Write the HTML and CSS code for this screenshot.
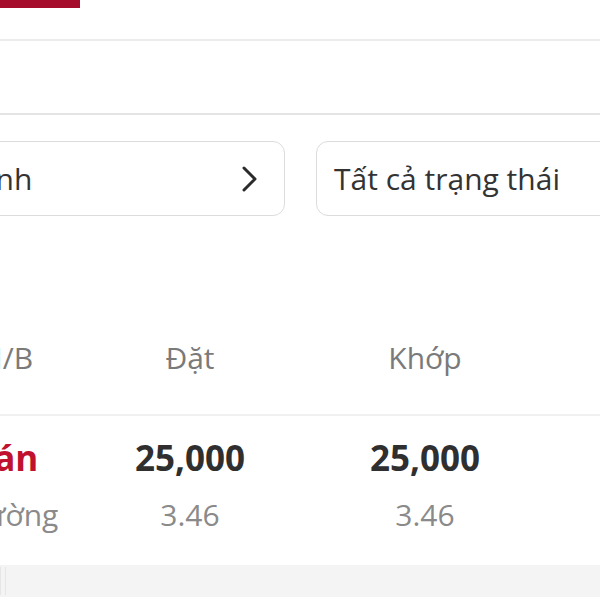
FILE: index.html
```html
<!DOCTYPE html>
<html lang="vi">
<head>
<meta charset="utf-8">
<title>Sổ lệnh</title>
<link rel="stylesheet" href="styles.css">
</head>
<body>
<div class="screen">
  <div class="tabbar"><span class="tab-indicator"></span></div>
  <div class="search-area"></div>
  <div class="filters">
    <div class="select select-left">
      <span class="select-text">Tất cả loại lệnh</span>
      <svg class="chev" width="22" height="28" viewBox="0 0 22 28"><path d="M6 3 L17 14 L6 25" fill="none" stroke="#2b2b2b" stroke-width="3" stroke-linecap="round" stroke-linejoin="round"/></svg>
    </div>
    <div class="select select-right">
      <span class="select-text">Tất cả trạng thái</span>
    </div>
  </div>
  <div class="table">
    <div class="row head">
      <div class="cell">M/B</div>
      <div class="cell">Đặt</div>
      <div class="cell">Khớp</div>
    </div>
    <div class="row body">
      <div class="cell">
        <div class="main sell">Bán</div>
        <div class="sub">Thường</div>
      </div>
      <div class="cell">
        <div class="main">25,000</div>
        <div class="sub">3.46</div>
      </div>
      <div class="cell">
        <div class="main">25,000</div>
        <div class="sub">3.46</div>
      </div>
    </div>
  </div>
  <div class="band"><span class="band-edge"></span></div>
</div>
</body>
</html>
```
FILE: styles.css
```css
html, body {
  margin: 0;
  padding: 0;
  background: #ffffff;
}
body {
  width: 600px;
  height: 600px;
  overflow: hidden;
  font-family: "Open Sans", "Noto Sans", sans-serif;
  color: #333333;
}
.screen {
  width: 600px;
}
.tabbar {
  height: 39px;
  border-bottom: 2px solid #ececec;
}
.tab-indicator {
  display: block;
  width: 80px;
  height: 8px;
  background: #a50b2b;
}
.search-area {
  height: 72px;
  border-bottom: 2px solid #e4e4e4;
}
.filters {
  display: flex;
  gap: 31px;
  margin-left: -215px;
  padding-top: 26px;
}
.select {
  flex: none;
  width: 500px;
  height: 75px;
  box-sizing: border-box;
  border: 1.5px solid #dcdcdc;
  border-radius: 12px;
  display: flex;
  align-items: center;
  justify-content: space-between;
  padding: 0 24px 0 17px;
  font-size: 30px;
  color: #333333;
}
.select-left {
  padding-left: 37px;
}
.select-text {
  white-space: nowrap;
}
.chev {
  display: block;
}
.table {
  margin-left: -63.5px;
}
.row {
  display: grid;
  grid-template-columns: 136px 235px 235px;
}
.head {
  padding-top: 124px;
  padding-bottom: 38px;
  border-bottom: 2px solid #f0f0f0;
  font-size: 30px;
  line-height: 36px;
  color: #7a7a7a;
}
.body {
  padding-top: 22px;
  padding-bottom: 32px;
}
.cell {
  text-align: center;
  white-space: nowrap;
}
.main {
  font-size: 35px;
  line-height: 40px;
  font-weight: 700;
  color: #2f2f2f;
}
.main.sell {
  color: #c0112e;
}
.sub {
  margin-top: 19px;
  font-size: 30px;
  line-height: 36px;
  color: #8a8a8a;
}
.band {
  height: 32px;
  background: #f4f4f4;
  position: relative;
}
.band-edge {
  position: absolute;
  left: 0;
  top: 2px;
  bottom: 2px;
  width: 4px;
  border-left: 1px solid #e6e6e6;
  border-right: 1px solid #e6e6e6;
}
```
